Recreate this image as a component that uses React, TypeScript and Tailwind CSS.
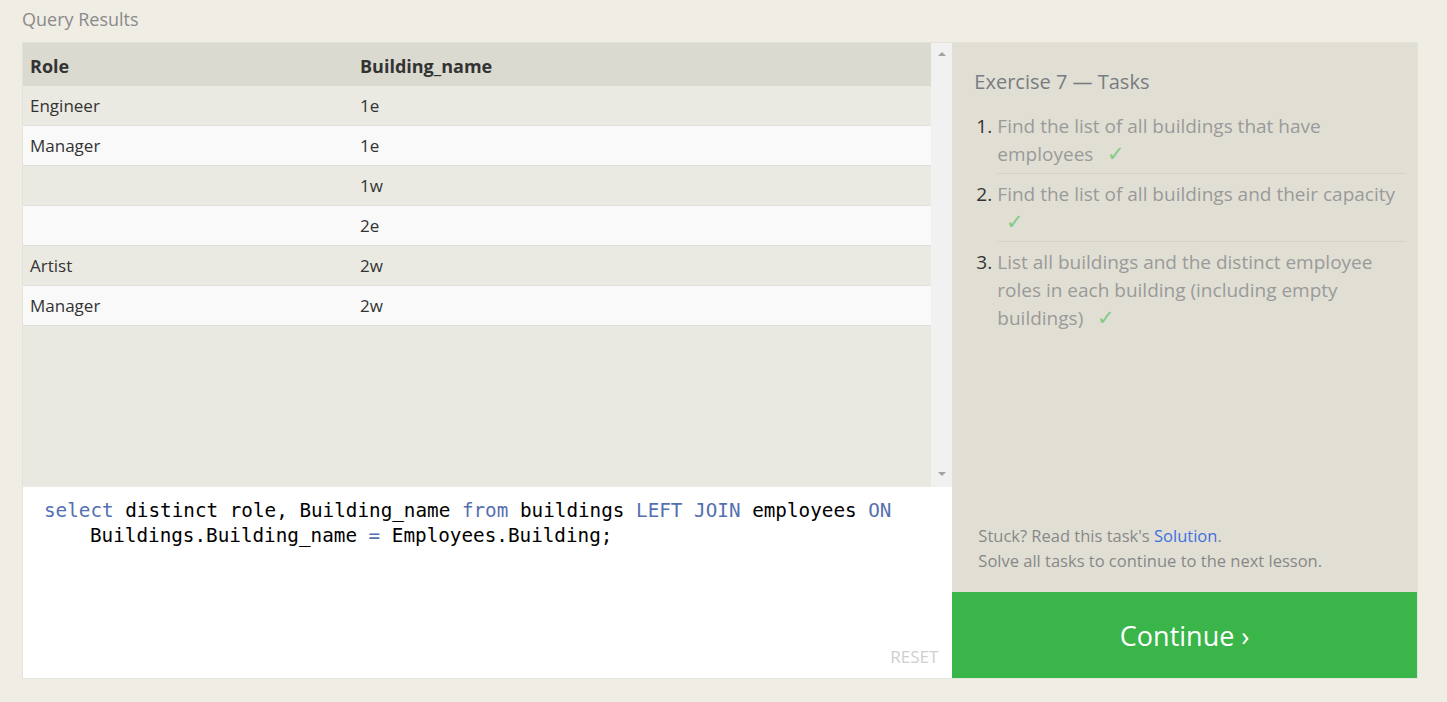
import React from "react";

const rows = [
  { role: "Engineer", building: "1e" },
  { role: "Manager", building: "1e" },
  { role: "", building: "1w" },
  { role: "", building: "2e" },
  { role: "Artist", building: "2w" },
  { role: "Manager", building: "2w" },
];

const tasks = [
  "Find the list of all buildings that have employees",
  "Find the list of all buildings and their capacity",
  "List all buildings and the distinct employee roles in each building (including empty buildings)",
];

const sans = "font-['Open_Sans','Noto_Sans',sans-serif]";

function Kw({ children }: { children: React.ReactNode }) {
  return <span className="text-[#5570b0]">{children}</span>;
}

export default function App() {
  return (
    <div className={`min-h-screen bg-[#f0ede5] px-[22px] ${sans}`}>
      <div className="pt-[7px] h-[42px] text-[18px] leading-[24px] text-[#8a8a8a]">
        Query Results
      </div>

      <div className="flex h-[637px] w-[1396px] border border-[#e4e3da]">
        {/* left side: results + editor */}
        <div className="flex w-[930px] flex-col">
          <div className="flex h-[444px]">
            <div className="flex-1 bg-[#eae9e1] text-[#333]">
              <div className="flex h-[43px] items-center bg-[#dadad0] pt-[4px] text-[18px] font-bold">
                <div className="w-[330px] pl-[7px]">Role</div>
                <div className="pl-[7px]">Building_name</div>
              </div>
              {rows.map((r, i) => (
                <div
                  key={i}
                  className={`flex h-[40px] items-center border-b border-[#e0dfd8] text-[17px] ${
                    i % 2 === 0 ? "bg-[#eaeae2]" : "bg-[#f9f9f9]"
                  }`}
                >
                  <div className="w-[330px] pl-[7px]">{r.role}</div>
                  <div className="pl-[7px]">{r.building}</div>
                </div>
              ))}
            </div>
            <div className="flex w-[21px] flex-col items-center justify-between bg-[#f1f1f1] pb-[11px] pt-[9px]">
              <div className="h-0 w-0 border-x-[4px] border-b-[4px] border-x-transparent border-b-[#a3a3a3]" />
              <div className="h-0 w-0 border-x-[4px] border-t-[4px] border-x-transparent border-t-[#a3a3a3]" />
            </div>
          </div>

          <div className="relative flex-1 bg-white pl-[21px] pt-[11px] font-['DejaVu_Sans_Mono','Liberation_Mono',monospace] text-[19.3px] leading-[25px] text-black">
            <div>
              <Kw>select</Kw> distinct role, Building_name <Kw>from</Kw> buildings{" "}
              <Kw>LEFT</Kw> <Kw>JOIN</Kw> employees <Kw>ON</Kw>
            </div>
            <div className="pl-[46px]">
              Buildings.Building_name <Kw>=</Kw> Employees.Building;
            </div>
            <div className={`absolute bottom-[9px] right-[14px] text-[17px] text-[#cfcfcf] ${sans}`}>
              RESET
            </div>
          </div>
        </div>

        {/* right side: tasks */}
        <div className="flex w-[465px] flex-col bg-[#e1dfd4]">
          <div className="flex-1 pl-[22px] pr-[11px] pt-[26px]">
            <div className="text-[20px] leading-[26px] text-[#777c82]">
              Exercise 7 — Tasks
            </div>
            <ol className="mt-[17px]">
              {tasks.map((t, i) => (
                <li
                  key={i}
                  className={`flex text-[19px] leading-[28px] ${i > 0 ? "pt-[6px]" : ""}`}
                >
                  <span className="w-[23px] shrink-0 pl-[2px] text-[#333]">{i + 1}.</span>
                  <div
                    className={`flex-1 text-[#9a9a9a] ${
                      i < tasks.length - 1 ? "border-b border-[#d5d3c8] pb-[5px]" : ""
                    }`}
                  >
                    {t}{" "}
                    <span className="ml-[9px] text-[21px] leading-[0] text-[#7fcb85]">✓</span>
                  </div>
                </li>
              ))}
            </ol>
          </div>
          <div className="pl-[26px] pb-[19px] text-[16.5px] leading-[25px] text-[#888]">
            <div>
              Stuck? Read this task's <span className="text-[#3f6fe0]">Solution</span>.
            </div>
            <div>Solve all tasks to continue to the next lesson.</div>
          </div>
          <div className="flex h-[86px] items-center justify-center bg-[#3ab54a] pt-[2px] text-[27px] text-white">
            Continue ›
          </div>
        </div>
      </div>
    </div>
  );
}
